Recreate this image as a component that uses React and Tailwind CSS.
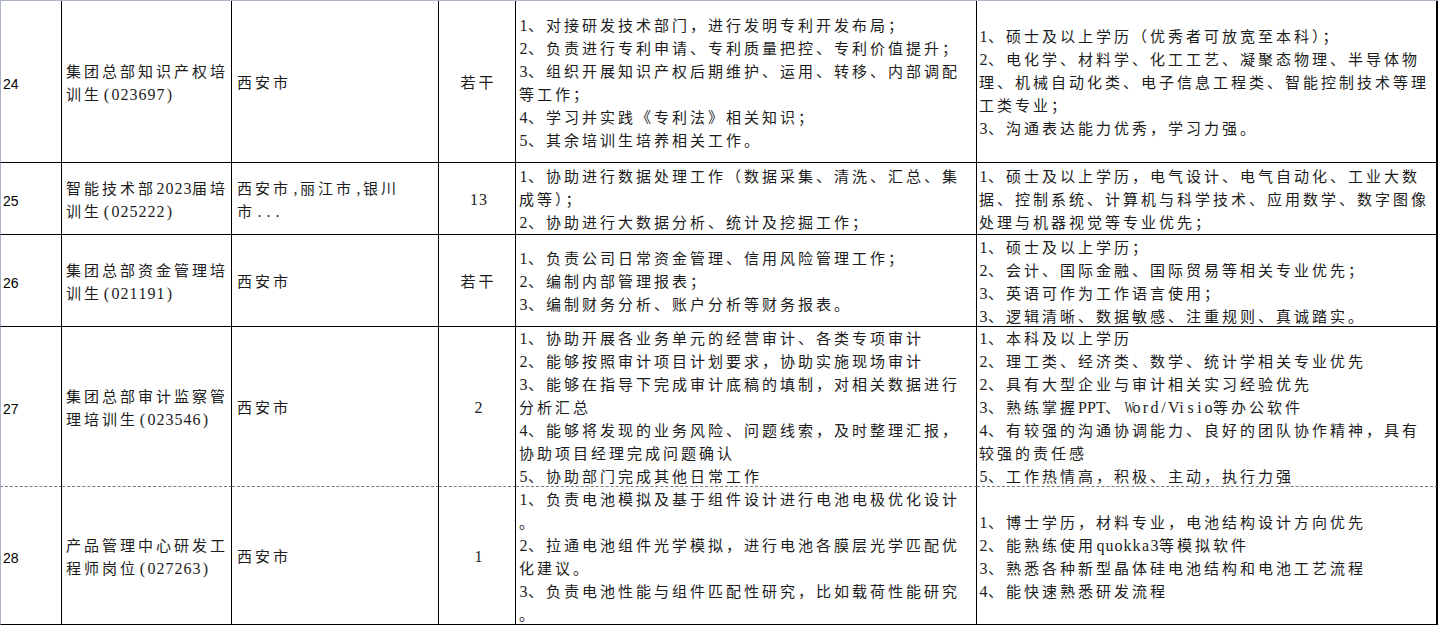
import React from "react";

const rows = [
  {
    n: "24",
    name: ["集团总部知识产权培", "训生(023697)"],
    city: ["西安市"],
    count: "若干",
    duty: [
      "1、对接研发技术部门，进行发明专利开发布局；",
      "2、负责进行专利申请、专利质量把控、专利价值提升；",
      "3、组织开展知识产权后期维护、运用、转移、内部调配",
      "等工作；",
      "4、学习并实践《专利法》相关知识；",
      "5、其余培训生培养相关工作。",
    ],
    req: [
      "1、硕士及以上学历（优秀者可放宽至本科）；",
      "2、电化学、材料学、化工工艺、凝聚态物理、半导体物",
      "理、机械自动化类、电子信息工程类、智能控制技术等理",
      "工类专业；",
      "3、沟通表达能力优秀，学习力强。",
    ],
  },
  {
    n: "25",
    name: ["智能技术部2023届培", "训生(025222)"],
    city: ["西安市,丽江市,银川", "市..."],
    count: "13",
    duty: [
      "1、协助进行数据处理工作（数据采集、清洗、汇总、集",
      "成等）；",
      "2、协助进行大数据分析、统计及挖掘工作；",
    ],
    req: [
      "1、硕士及以上学历，电气设计、电气自动化、工业大数",
      "据、控制系统、计算机与科学技术、应用数学、数字图像",
      "处理与机器视觉等专业优先；",
    ],
  },
  {
    n: "26",
    name: ["集团总部资金管理培", "训生(021191)"],
    city: ["西安市"],
    count: "若干",
    duty: [
      "1、负责公司日常资金管理、信用风险管理工作；",
      "2、编制内部管理报表；",
      "3、编制财务分析、账户分析等财务报表。",
    ],
    req: [
      "1、硕士及以上学历；",
      "2、会计、国际金融、国际贸易等相关专业优先；",
      "3、英语可作为工作语言使用；",
      "3、逻辑清晰、数据敏感、注重规则、真诚踏实。",
    ],
  },
  {
    n: "27",
    name: ["集团总部审计监察管", "理培训生(023546)"],
    city: ["西安市"],
    count: "2",
    duty: [
      "1、协助开展各业务单元的经营审计、各类专项审计",
      "2、能够按照审计项目计划要求，协助实施现场审计",
      "3、能够在指导下完成审计底稿的填制，对相关数据进行",
      "分析汇总",
      "4、能够将发现的业务风险、问题线索，及时整理汇报，",
      "协助项目经理完成问题确认",
      "5、协助部门完成其他日常工作",
    ],
    req: [
      "1、本科及以上学历",
      "2、理工类、经济类、数学、统计学相关专业优先",
      "2、具有大型企业与审计相关实习经验优先",
      "3、熟练掌握PPT、Word/Visio等办公软件",
      "4、有较强的沟通协调能力、良好的团队协作精神，具有",
      "较强的责任感",
      "5、工作热情高，积极、主动，执行力强",
    ],
  },
  {
    n: "28",
    name: ["产品管理中心研发工", "程师岗位(027263)"],
    city: ["西安市"],
    count: "1",
    duty: [
      "1、负责电池模拟及基于组件设计进行电池电极优化设计",
      "。",
      "2、拉通电池组件光学模拟，进行电池各膜层光学匹配优",
      "化建议。",
      "3、负责电池性能与组件匹配性研究，比如载荷性能研究",
      "。",
    ],
    req: [
      "1、博士学历，材料专业，电池结构设计方向优先",
      "2、能熟练使用quokka3等模拟软件",
      "3、熟悉各种新型晶体硅电池结构和电池工艺流程",
      "4、能快速熟悉研发流程",
    ],
  },
];

function T({ s }) {
  const parts = s.split(/([\x20-\x7e]+)/);
  return parts.map((p, i) =>
    /^[\x20-\x7e]+$/.test(p) ? (
      <span
        key={i}
        className="[font-family:'Liberation_Serif',serif] text-[16px] tracking-normal leading-none"
      >
        {Array.from(p).map((c, j) => (
          <span
            key={j}
            className={
              c === "W" || c === "M"
                ? "inline-block w-[9px] text-center scale-x-[0.62]"
                : "inline-block w-[9px] text-center"
            }
          >
            {c}
          </span>
        ))}
      </span>
    ) : (
      <React.Fragment key={i}>{p}</React.Fragment>
    )
  );
}

function Lines({ lines }) {
  return lines.map((l, i) => (
    <div key={i} className="h-[23px] shrink-0 whitespace-nowrap">
      <T s={l} />
    </div>
  ));
}

export default function App() {
  return (
    <div className="w-[1438px] h-[625px] bg-white overflow-hidden">
      <div className="grid grid-cols-[62px_170px_207px_77px_461px_461px] grid-rows-[162px_72px_92px_160px_138px] border-t border-[#a9b3c6] text-[15px] leading-[23px] tracking-[3px] text-[#1c1c1c] [font-family:'Noto_Sans_CJK_SC',sans-serif]">
        {rows.map((r, idx) => {
          const b =
            idx === 3
              ? "border-r border-b border-r-black border-b-[#7a7a7a] [border-bottom-style:dashed]"
              : "border-r border-b border-black";
          return (
            <React.Fragment key={r.n}>
              <div
                className={`${b} border-l border-l-[#a9b3c6] flex flex-col justify-center pt-[6px] pl-[2px] text-[14px] tracking-normal text-black [font-family:'Liberation_Sans',sans-serif]`}
              >
                {r.n}
              </div>
              <div className={`${b} flex flex-col justify-center pl-[4px]`}>
                <Lines lines={r.name} />
              </div>
              <div className={`${b} flex flex-col justify-center pl-[5px]`}>
                <Lines lines={r.city} />
              </div>
              <div className={`${b} flex flex-col justify-center items-center pl-[3px]`}>
                <Lines lines={[r.count]} />
              </div>
              <div className={`${b} flex flex-col justify-center pl-[3px]`}>
                <Lines lines={r.duty} />
              </div>
              <div
                className={`${b} border-r-2 flex flex-col justify-center pl-[2px]`}
              >
                <Lines lines={r.req} />
              </div>
            </React.Fragment>
          );
        })}
      </div>
    </div>
  );
}
